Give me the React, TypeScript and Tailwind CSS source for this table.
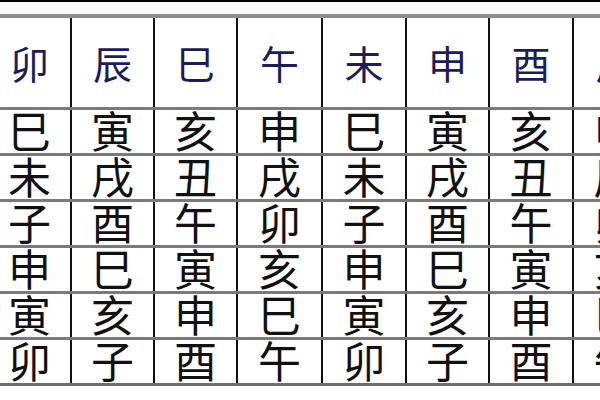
import React from "react";

const COLS = ["w-[83px]", "w-[83px]", "w-[83px]", "w-[85px]", "w-[84px]", "w-[83px]", "w-[84px]", "w-[84px]"];

const HEAD = ["卯", "辰", "巳", "午", "未", "申", "酉", "戌"];

const ROWS = [
  ["巳", "寅", "亥", "申", "巳", "寅", "亥", "申"],
  ["未", "戌", "丑", "戌", "未", "戌", "丑", "辰"],
  ["子", "酉", "午", "卯", "子", "酉", "午", "卯"],
  ["申", "巳", "寅", "亥", "申", "巳", "寅", "亥"],
  ["寅", "亥", "申", "巳", "寅", "亥", "申", "巳"],
  ["卯", "子", "酉", "午", "卯", "子", "酉", "午"],
];

const font = { fontFamily: '"Noto Sans CJK SC", "Noto Sans CJK TC", sans-serif' };

export default function App() {
  return (
    <div className="w-[600px] h-[400px] overflow-hidden bg-white" style={font}>
      <div className="h-[2px] bg-black" />
      <div className="h-[12px] bg-[#fafafa]" />
      <div className="h-[4px] bg-[#8c8c8c]" />
      <div className="-ml-[11px] w-[680px]">
        <div className="flex h-[89px]">
          {HEAD.map((c, i) => (
            <div
              key={i}
              className={`${COLS[i]} shrink-0 flex items-center justify-center border-r-[2px] border-[#111] text-[39px] leading-none text-[#1c1c5c]`}
            >
              {c}
            </div>
          ))}
        </div>
        {ROWS.map((row, r) => (
          <div key={r} className="flex h-[46px] border-t-[3px] border-[#7a7a7a]">
            {row.map((c, i) => (
              <div
                key={i}
                className={`${COLS[i]} shrink-0 flex items-center justify-center border-r-[2px] border-[#111] text-[43px] leading-none text-[#111] overflow-visible`}
              >
                <span className="-mt-[4px]">{c}</span>
              </div>
            ))}
          </div>
        ))}
        <div className="h-[3px] bg-[#6e6e6e]" />
      </div>
      <div className="h-[14px] bg-white" />
    </div>
  );
}
